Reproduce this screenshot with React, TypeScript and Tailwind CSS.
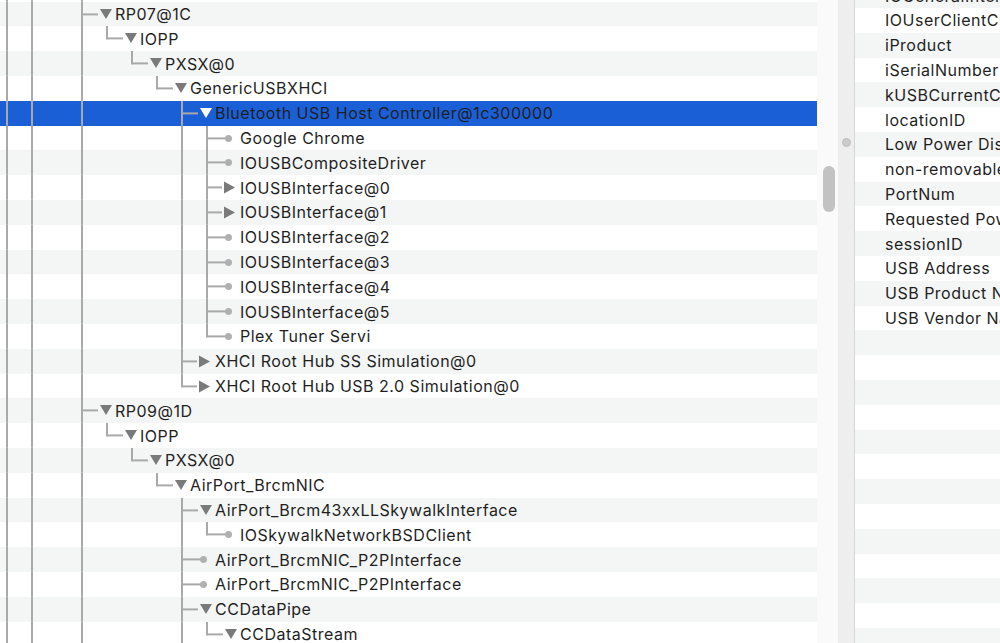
import React from "react";

type Kind = "down" | "right" | "leaf";
type Row = {
  label: string;
  d: number;
  kind: Kind;
  last: boolean;
  through: number[];
};

const A = [7, 32, 82];
const B = [7, 32, 82, 182];

const rows: Row[] = [
  { label: "RP07@1C", d: 0, kind: "down", last: false, through: [7, 32] },
  { label: "IOPP", d: 1, kind: "down", last: true, through: A },
  { label: "PXSX@0", d: 2, kind: "down", last: true, through: A },
  { label: "GenericUSBXHCI", d: 3, kind: "down", last: true, through: A },
  { label: "Bluetooth USB Host Controller@1c300000", d: 4, kind: "down", last: false, through: A },
  { label: "Google Chrome", d: 5, kind: "leaf", last: false, through: B },
  { label: "IOUSBCompositeDriver", d: 5, kind: "leaf", last: false, through: B },
  { label: "IOUSBInterface@0", d: 5, kind: "right", last: false, through: B },
  { label: "IOUSBInterface@1", d: 5, kind: "right", last: false, through: B },
  { label: "IOUSBInterface@2", d: 5, kind: "leaf", last: false, through: B },
  { label: "IOUSBInterface@3", d: 5, kind: "leaf", last: false, through: B },
  { label: "IOUSBInterface@4", d: 5, kind: "leaf", last: false, through: B },
  { label: "IOUSBInterface@5", d: 5, kind: "leaf", last: false, through: B },
  { label: "Plex Tuner Servi", d: 5, kind: "leaf", last: true, through: B },
  { label: "XHCI Root Hub SS Simulation@0", d: 4, kind: "right", last: false, through: A },
  { label: "XHCI Root Hub USB 2.0 Simulation@0", d: 4, kind: "right", last: true, through: A },
  { label: "RP09@1D", d: 0, kind: "down", last: false, through: [7, 32] },
  { label: "IOPP", d: 1, kind: "down", last: true, through: A },
  { label: "PXSX@0", d: 2, kind: "down", last: true, through: A },
  { label: "AirPort_BrcmNIC", d: 3, kind: "down", last: true, through: A },
  { label: "AirPort_Brcm43xxLLSkywalkInterface", d: 4, kind: "down", last: false, through: A },
  { label: "IOSkywalkNetworkBSDClient", d: 5, kind: "leaf", last: true, through: B },
  { label: "AirPort_BrcmNIC_P2PInterface", d: 4, kind: "leaf", last: false, through: A },
  { label: "AirPort_BrcmNIC_P2PInterface", d: 4, kind: "leaf", last: false, through: A },
  { label: "CCDataPipe", d: 4, kind: "down", last: false, through: A },
  { label: "CCDataStream", d: 5, kind: "down", last: true, through: B },
];

const props = [
  "IOGeneralInterest",
  "IOUserClientClass",
  "iProduct",
  "iSerialNumber",
  "kUSBCurrentConfiguration",
  "locationID",
  "Low Power Displayed",
  "non-removable",
  "PortNum",
  "Requested Power",
  "sessionID",
  "USB Address",
  "USB Product Name",
  "USB Vendor Name",
];

const H = 24.8;
const C = 12.4;
const LINE = "#a9a9a9";
const TRI = "#7a7a7a";

function TreeRow({ row, index, selected }: { row: Row; index: number; selected: boolean }) {
  const { d, kind, last, through } = row;
  const w = 115 + 25 * d;
  const vx = 82 + 25 * d;
  const tx = 100 + 25 * d;
  const bg = selected ? "bg-[#1b5fd7]" : index % 2 === 0 ? "bg-[#f4f5f5]" : "bg-white";
  const triColor = selected ? "#ffffff" : TRI;
  let hEnd = tx - 2;
  if (kind === "leaf") hEnd = tx + 3.5;
  if (kind === "right") hEnd = tx - 3;
  return (
    <div className={`flex h-[24.8px] w-[817px] shrink-0 items-center ${bg}`}>
      <svg width={w} height={H} className="shrink-0" viewBox={`0 0 ${w} ${H}`}>
        {through.map((x) => (
          <line key={x} x1={x} y1={0} x2={x} y2={H} stroke={LINE} strokeWidth={2} />
        ))}
        <line x1={vx} y1={0} x2={vx} y2={last ? C + 1 : H} stroke={LINE} strokeWidth={2} />
        <line x1={vx} y1={C} x2={hEnd} y2={C} stroke={LINE} strokeWidth={2} />
        {kind === "down" && (
          <polygon points={`${tx},${C - 5.5} ${tx + 12},${C - 5.5} ${tx + 6},${C + 4.5}`} fill={triColor} />
        )}
        {kind === "right" && (
          <polygon points={`${tx - 1},${C - 6} ${tx - 1},${C + 6} ${tx + 10},${C}`} fill={triColor} />
        )}
        {kind === "leaf" && <circle cx={tx + 3.5} cy={C} r={3.5} fill="#b0b0b0" />}
      </svg>
      <span className="whitespace-nowrap text-[16px] tracking-[0.5px] text-[#1f1f1f]">{row.label}</span>
    </div>
  );
}

export default function App() {
  return (
    <div
      className="flex h-[643px] w-[1000px] overflow-hidden bg-white"
      style={{ fontFamily: "Inter, 'Noto Sans', sans-serif" }}
    >
      <div className="flex h-full w-[817px] shrink-0 flex-col overflow-hidden">
        <div className="mt-[-23.2px] flex h-[24.8px] w-[817px] shrink-0 bg-white">
          <svg width={120} height={H} viewBox={`0 0 120 ${H}`}>
            {[7, 32, 82].map((x) => (
              <line key={x} x1={x} y1={0} x2={x} y2={H} stroke={LINE} strokeWidth={2} />
            ))}
          </svg>
        </div>
        {rows.map((r, i) => (
          <TreeRow key={i} row={r} index={i} selected={i === 4} />
        ))}
      </div>
      <div className="flex h-full w-[21px] shrink-0 flex-col bg-[#fafafa]">
        <div className="ml-[6px] mt-[166px] h-[46px] w-[12px] rounded-full bg-[#c2c2c2]" />
      </div>
      <div className="flex h-full w-[17px] shrink-0 flex-col items-center border-l border-r border-l-[#ededed] border-r-[#d6d6d6] bg-[#eeeeee]">
        <div className="mt-[138px] h-[9px] w-[9px] rounded-full border border-[#bdbdbd] bg-[#cbcbcb]" />
      </div>
      <div className="flex h-full flex-1 flex-col overflow-hidden">
        <div className="mt-[-16.8px] flex flex-col">
          {Array.from({ length: 28 }).map((_, j) => (
            <div
              key={j}
              className={`flex h-[24.8px] shrink-0 items-center pl-[30px] ${j % 2 === 0 ? "bg-[#f4f5f5]" : "bg-white"}`}
            >
              <span className="whitespace-nowrap text-[16px] tracking-[0.5px] text-[#1f1f1f]">{props[j] ?? ""}</span>
            </div>
          ))}
        </div>
      </div>
    </div>
  );
}
